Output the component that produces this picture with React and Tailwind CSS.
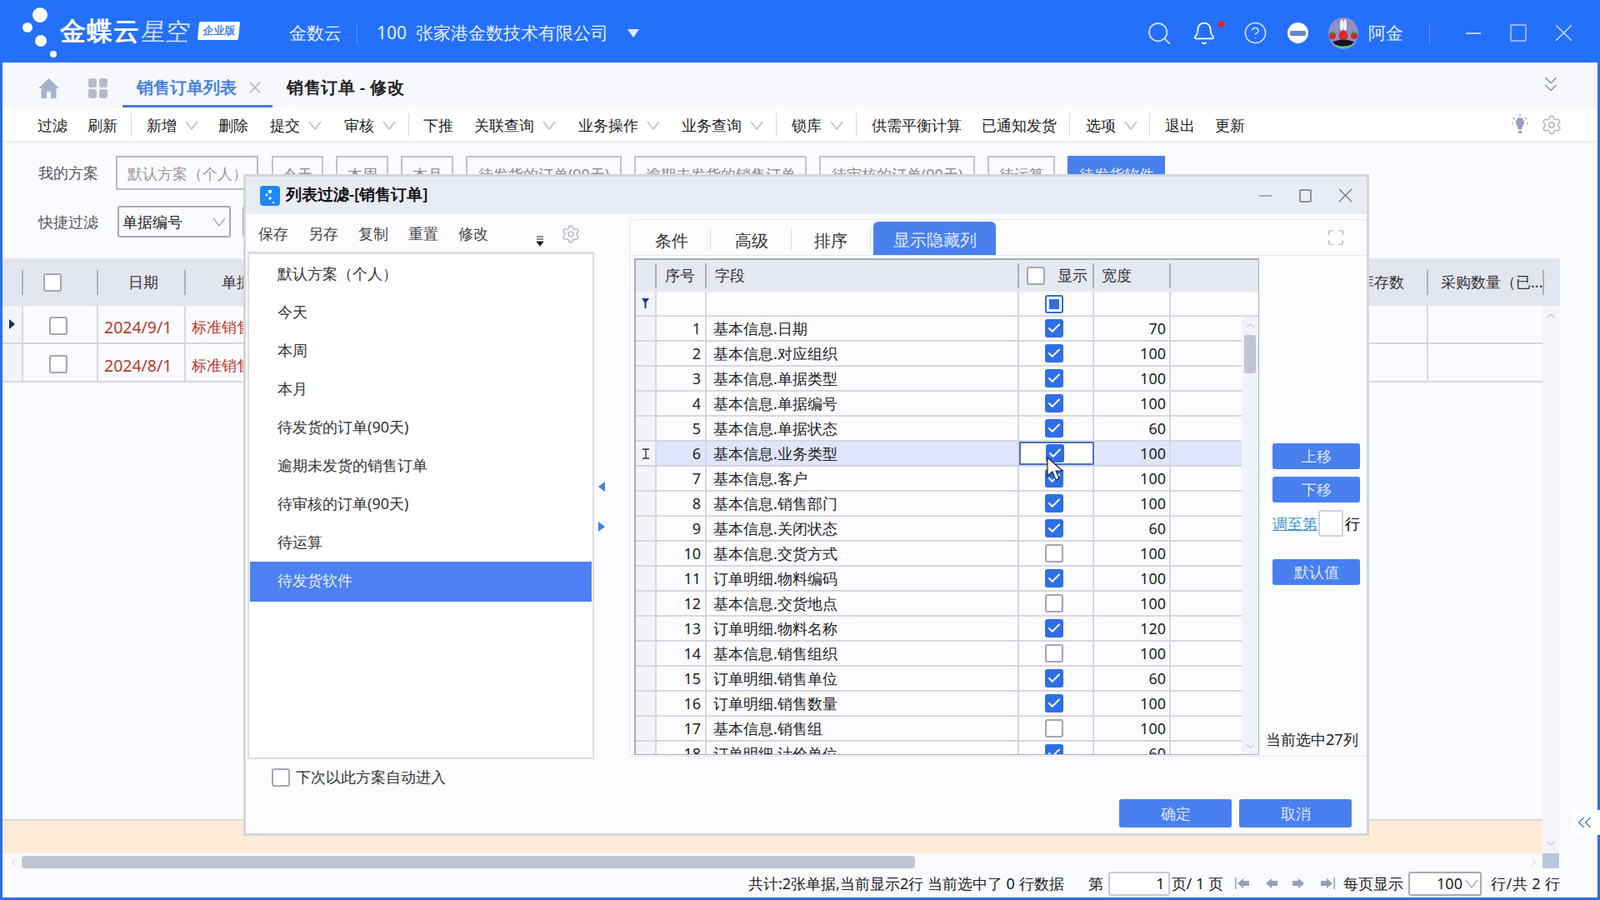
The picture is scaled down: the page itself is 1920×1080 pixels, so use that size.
import React from "react";
import { Search, Bell, CircleHelp, ChevronDown, ChevronUp, ChevronLeft, ChevronRight, ChevronsDown, ChevronsLeft, Settings, Check, Maximize } from "lucide-react";

const toolbarItems = [
  { label: "过滤", ml: "ml-0" },
  { label: "刷新", ml: "ml-[24px]" },
  { divider: true, ml: "ml-[16px]" },
  { label: "新增", ml: "ml-[18px]", chevron: true },
  { label: "删除", ml: "ml-[24px]" },
  { label: "提交", ml: "ml-[26px]", chevron: true },
  { label: "审核", ml: "ml-[27px]", chevron: true },
  { divider: true, ml: "ml-[15px]" },
  { label: "下推", ml: "ml-[17px]" },
  { label: "关联查询", ml: "ml-[25px]", chevron: true },
  { label: "业务操作", ml: "ml-[27px]", chevron: true },
  { label: "业务查询", ml: "ml-[26px]", chevron: true },
  { divider: true, ml: "ml-[15px]" },
  { label: "锁库", ml: "ml-[18px]", chevron: true },
  { divider: true, ml: "ml-[15px]" },
  { label: "供需平衡计算", ml: "ml-[18px]" },
  { label: "已通知发货", ml: "ml-[24px]" },
  { divider: true, ml: "ml-[15px]" },
  { label: "选项", ml: "ml-[19px]", chevron: true },
  { divider: true, ml: "ml-[14px]" },
  { label: "退出", ml: "ml-[18px]" },
  { label: "更新", ml: "ml-[24px]" },
];

const quickFilters = [
  { label: "今天", w: "w-[62px]" },
  { label: "本周", w: "w-[63px]" },
  { label: "本月", w: "w-[63px]" },
  { label: "待发货的订单(90天)", w: "w-[187px]" },
  { label: "逾期未发货的销售订单", w: "w-[207px]" },
  { label: "待审核的订单(90天)", w: "w-[187px]" },
  { label: "待运算", w: "w-[81px]" },
  { label: "待发货软件", w: "w-[117px]", active: true },
];

const schemes = [
  "默认方案（个人）",
  "今天",
  "本周",
  "本月",
  "待发货的订单(90天)",
  "逾期未发货的销售订单",
  "待审核的订单(90天)",
  "待运算",
];

const fields = [
  ["基本信息.日期", true, 70],
  ["基本信息.对应组织", true, 100],
  ["基本信息.单据类型", true, 100],
  ["基本信息.单据编号", true, 100],
  ["基本信息.单据状态", true, 60],
  ["基本信息.业务类型", true, 100],
  ["基本信息.客户", true, 100],
  ["基本信息.销售部门", true, 100],
  ["基本信息.关闭状态", true, 60],
  ["基本信息.交货方式", false, 100],
  ["订单明细.物料编码", true, 100],
  ["基本信息.交货地点", false, 100],
  ["订单明细.物料名称", true, 120],
  ["基本信息.销售组织", false, 100],
  ["订单明细.销售单位", true, 60],
  ["订单明细.销售数量", true, 100],
  ["基本信息.销售组", false, 100],
  ["订单明细.计价单位", true, 60],
];

const Box = ({ checked }) =>
  checked ? (
    <span className="flex h-[22px] w-[22px] items-center justify-center rounded-[3px] bg-[#2f6fe6]">
      <Check size={18} strokeWidth={2.6} className="text-white" />
    </span>
  ) : (
    <span className="block h-[22px] w-[22px] rounded-[3px] border-2 border-[#a3a6b4] bg-white"></span>
  );

// the thin V used by every dropdown in the app
const Vee = ({ className }) => (
  <svg width="16" height="11" viewBox="0 0 16 11" className={className}>
    <path d="M1 1l7 9 7-9" stroke="currentColor" strokeWidth="1.300" fill="none" />
  </svg>
);

const Cross = ({ size, className, width = 1.3 }) => (
  <svg width={size} height={size} viewBox="0 0 18 18" className={className}>
    <path d="M1 1l16 16M17 1L1 17" stroke="currentColor" strokeWidth={width} fill="none" />
  </svg>
);

const Logo = () => (
  <svg width="48" height="75" viewBox="0 0 48 75" className="-mt-[4px] shrink-0">
    <circle cx="24" cy="18" r="9" fill="#fff" />
    <circle cx="9" cy="33" r="6" fill="#fff" />
    <circle cx="25" cy="49" r="7" fill="#fff" />
    <circle cx="40" cy="65" r="4" fill="#fff" />
  </svg>
);

const Avatar = () => (
  <svg width="36" height="38" viewBox="0 0 36 38" className="shrink-0">
    <ellipse cx="18" cy="19" rx="18" ry="19" fill="#8f90c4" />
    <ellipse cx="16" cy="9" rx="2" ry="7" fill="#f3f3f3" />
    <ellipse cx="20" cy="9" rx="2" ry="7" fill="#f3f3f3" />
    <ellipse cx="18" cy="22" rx="5.500" ry="6.500" fill="#d92b2b" />
    <circle cx="5" cy="22" r="4" fill="#c92a2a" />
    <circle cx="31" cy="22" r="4" fill="#c92a2a" />
    <path d="M3 17l2 2 2-2M29 17l2 2 2-2" stroke="#2e9b4a" strokeWidth="2" fill="none" />
    <path d="M5 29 Q18 24 31 29 L27 33 Q18 36 9 33 Z" fill="#15151c" />
    <path d="M9 34 Q18 38 27 34" stroke="#5fc27d" strokeWidth="2" fill="none" />
  </svg>
);

const TopBar = () => (
  <div className="flex h-[75px] shrink-0 items-center bg-[#2470fb] pl-[24px] pr-[33px] pt-[4px] text-[#e4eeff]">
    <Logo />
    <span className="-mt-[6px] text-[31px] font-bold tracking-[1px] text-white">金蝶云</span>
    <span className="-mt-[6px] ml-[2px] inline-block -skew-x-6 text-[29px] font-light text-[#cfe0ff]">星空</span>
    <span className="-mt-[6px] ml-[10px] flex h-[22px] w-[49px] -skew-x-6 items-center justify-center rounded-[2px] bg-white text-[13px] font-bold text-[#4a86ee]">
      企业版
    </span>
    <span className="ml-[60px] text-[21px]">金数云</span>
    <span className="ml-[18px] h-[26px] w-px bg-[#5c93f8]"></span>
    <span className="ml-[23px] text-[21px]">100</span>
    <span className="ml-[11px] text-[21px]">张家港金数技术有限公司</span>
    <svg width="14" height="10" viewBox="0 0 14 10" className="ml-[23px]">
      <path d="M0 0h14L7 10z" fill="#e4eeff" />
    </svg>
    <Search size={32} strokeWidth={1.4} className="ml-auto text-[#c6dafd]" />
    <span className="relative ml-[23px]">
      <Bell size={30} strokeWidth={1.4} className="text-white" />
      <span className="absolute -right-[9px] top-0 h-[8px] w-[7px] rounded-full bg-[#e0202c]"></span>
    </span>
    <CircleHelp size={29} strokeWidth={1.3} className="ml-[32px] text-[#d5e4ff]" />
    <span className="ml-[24px] flex h-[25px] w-[25px] items-center justify-center rounded-full bg-white">
      <span className="block h-[6px] w-[19px] rounded-[2px] bg-[#6a86c8]"></span>
    </span>
    <span className="ml-[24px]">
      <Avatar />
    </span>
    <span className="ml-[12px] text-[21px]">阿金</span>
    <span className="ml-[31px] h-[26px] w-px bg-[#5c93f8]"></span>
    <span className="ml-[43px] h-[2px] w-[18px] bg-[#b8d0fb]"></span>
    <span className="ml-[35px] h-[21px] w-[20px] rounded-[2px] border-2 border-[#8db5fb]"></span>
    <Cross size={21} className="ml-[34px] text-[#c6dafd]" />
  </div>
);

const TabRow = () => (
  <div className="flex h-[54px] shrink-0 items-center bg-[#f7f8fd] pl-[43px] pt-[5px]">
    <svg width="25" height="24" viewBox="0 0 25 24" className="mt-[2px] shrink-0">
      <path d="M12.500 0L25 12h-3.500v12H15v-8H10v8H3.500V12H0z" fill="#a8b2cb" />
    </svg>
    <svg width="24" height="24" viewBox="0 0 24 24" className="ml-[34px] mt-[2px] shrink-0">
      <rect x="1" y="0" width="10" height="11" rx="3" fill="#b5bacd" />
      <rect x="14" y="0" width="10" height="11" rx="3" fill="#b5bacd" />
      <rect x="1" y="13" width="10" height="11" rx="3" fill="#b5bacd" />
      <rect x="14" y="13" width="10" height="11" rx="3" fill="#b5bacd" />
    </svg>
    <div className="relative -mt-[5px] ml-[18px] flex h-[54px] w-[180px] items-center pl-[17px] pt-[5px]">
      <span className="text-[20px] font-semibold text-[#4a80e4]">销售订单列表</span>
      <Cross size={14} width={2} className="ml-[15px] text-[#aab0bd]" />
      <span className="absolute bottom-0 left-0 h-[3px] w-full bg-[#4a7fd8]"></span>
    </div>
    <span className="ml-[17px] text-[20px] font-semibold tracking-[0.5px] text-[#222]">销售订单 - 修改</span>
    <ChevronsDown size={30} strokeWidth={1.3} className="-mt-[8px] ml-auto mr-[41px] text-[#8c95b0]" />
  </div>
);

const Toolbar = () => (
  <div className="relative z-10 flex h-[40px] shrink-0 items-center bg-white pl-[42px] pt-[2px] text-[18px] text-[#1c1c1c] shadow-[0_2px_3px_rgba(40,50,90,0.08)]">
    {toolbarItems.map((item, i) =>
      item.divider ? (
        <span key={i} className={`h-[28px] w-px bg-[#d8d9e0] ${item.ml}`}></span>
      ) : (
        <span key={i} className={`flex items-center ${item.ml}`}>
          {item.label}
          {item.chevron && <Vee className="ml-[10px] text-[#b4b8c4]" />}
        </span>
      )
    )}
    <svg width="20" height="26" viewBox="0 0 20 26" className="ml-auto shrink-0">
      <path d="M10 4c3 0 5 2.500 5 5.500 0 3-2 4-3 9h-4c-1-5-3-6-3-9C5 6.500 7 4 10 4z" fill="#98a0ba" />
      <path d="M10 0v2M2 4l2 2M18 4l-2 2M0 11h2M18 11h2" stroke="#98a0ba" strokeWidth="1.500" />
      <rect x="8" y="20" width="4" height="3" fill="#98a0ba" />
    </svg>
    <Settings size={26} strokeWidth={1.4} className="ml-[15px] mr-[42px] text-[#b0b6c6]" />
  </div>
);

const FilterArea = () => (
  <div className="flex h-[141px] shrink-0 flex-col pl-[43px] pt-[18px] text-[18px]">
    <div className="flex items-center">
      <span className="w-[93px] text-[#555]">我的方案</span>
      <div className="flex h-[41px] w-[171px] items-center border-2 border-[#b8bac4] pl-[12px] pt-[2px] text-[#999]">默认方案（个人）</div>
      <div className="ml-[16px] flex gap-[15px]">
        {quickFilters.map((f) => (
          <div
            key={f.label}
            className={
              f.active
                ? `flex h-[41px] items-center justify-center whitespace-nowrap bg-[#4a80ee] pt-[4px] text-[#e8efff] ${f.w}`
                : `flex h-[41px] items-center justify-center whitespace-nowrap border-2 border-[#c2c4cc] pt-[4px] text-[#888] ${f.w}`
            }
          >
            {f.label}
          </div>
        ))}
      </div>
    </div>
    <div className="mt-[19px] flex items-center">
      <span className="w-[95px] text-[#555]">快捷过滤</span>
      <div className="flex h-[38px] w-[136px] items-center justify-between rounded-[3px] border-2 border-[#a8abb8] pl-[4px] pr-[4px] text-[#222]">
        单据编号
        <Vee className="text-[#a4a8b6]" />
      </div>
      <div className="ml-[14px] h-[38px] w-[60px] rounded-[3px] border-2 border-[#a8abb8]"></div>
    </div>
  </div>
);

const HeadDivider = () => <span className="ml-auto h-[30px] w-[2px] shrink-0 bg-[#aeb0bb]"></span>;

const PageTable = () => (
  <div className="flex h-[714px] shrink-0 flex-col">
    <div className="mr-[45px] flex h-[57px] shrink-0 items-center bg-[#e3e5f0] text-[18px] text-[#333]">
      <div className="flex w-[25px] items-center"><HeadDivider /></div>
      <div className="flex w-[90px] items-center pl-[24px]"><Box /><HeadDivider /></div>
      <div className="flex w-[105px] items-center pl-[36px]">日期<HeadDivider /></div>
      <div className="flex w-[69px] items-center overflow-hidden whitespace-nowrap pl-[43px]">单据类型</div>
      <div className="flex-1"></div>
      <div className="flex w-[71px] items-center justify-end overflow-hidden whitespace-nowrap"><span className="mr-[27px]">库存数</span><HeadDivider /></div>
      <div className="flex w-[138px] items-center whitespace-nowrap pl-[15px]">采购数量（已...<HeadDivider /></div>
      <div className="w-[20px]"></div>
    </div>
    <div className="mr-[46px] flex min-h-0 flex-1">
      <div className="flex min-w-0 flex-1 flex-col">
        <div className="flex-1 border-b-2 border-[#d8d8dc]">
          {["2024/9/1", "2024/8/1"].map((date, i) => (
            <div key={date} className="flex h-[46px] border-b-2 border-[#d8d8e0] text-[#b83a2c]">
              <div className="flex w-[25px] items-center justify-center border-r-2 border-[#d8d8e0] bg-[#f3f4f9]">
                {i === 0 && (
                  <svg width="7" height="12" viewBox="0 0 7 12">
                    <path d="M0 0l7 6-7 6z" fill="#12305e" />
                  </svg>
                )}
              </div>
              <div className="flex w-[90px] items-center border-r-2 border-[#d8d8e0] pl-[31px] pt-[4px]"><Box /></div>
              <div className="flex w-[105px] items-center border-r-2 border-[#d8d8e0] pl-[7px] pt-[7px] text-[19.5px]">{date}</div>
              <div className="flex w-[69px] items-center overflow-hidden whitespace-nowrap pl-[7px] pt-[6px] text-[18px]">标准销售订单</div>
              <div className="flex-1"></div>
              <div className="w-[71px] border-r-2 border-[#d8d8e0]"></div>
              <div className="w-[137px]"></div>
            </div>
          ))}
        </div>
        <div className="h-[39px] shrink-0 bg-[#feecd6]"></div>
      </div>
      <div className="flex w-[20px] shrink-0 flex-col items-center justify-between bg-[#f3f4fc] py-[4px] text-[#c3c6d2]">
        <ChevronUp size={16} strokeWidth={1.8} />
        <ChevronDown size={16} strokeWidth={1.8} />
      </div>
    </div>
  </div>
);

const HorizontalScroll = () => (
  <div className="flex h-[18px] shrink-0 items-end text-[#c3c6d2]">
    <div className="flex h-[15px] w-[23px] items-center pl-[6px]">
      <ChevronLeft size={15} strokeWidth={1.6} />
    </div>
    <div className="h-[15px] w-[1072px] rounded-[4px] bg-[#c3c4d4]"></div>
    <div className="flex h-[15px] w-[753px] items-center justify-end pr-[3px]">
      <ChevronRight size={15} strokeWidth={1.6} />
    </div>
    <div className="h-[18px] w-[20px] bg-[#b9c6de]"></div>
  </div>
);

const Arrow = ({ flip, bar }) => (
  <svg width="18" height="16" viewBox="0 0 18 16" className={flip ? "shrink-0 -scale-x-100" : "shrink-0"}>
    {bar && <rect x="0" y="1" width="1.500" height="14" fill="#9aa0b4" />}
    <path d="M3 8l7-6v3h7v6h-7v3z" fill="#9aa0b4" />
  </svg>
);

const StatusBar = () => (
  <div className="flex h-[35px] shrink-0 items-center pl-[895px] pt-[1px] text-[18px] text-[#222]">
    <span className="whitespace-pre">共计:2张单据,当前显示2行 当前选中了 0 行数据</span>
    <span className="ml-[29px]">第</span>
    <div className="ml-[6px] flex h-[29px] w-[74px] items-center justify-end rounded-[3px] border-2 border-[#c8cad4] bg-white pr-[4px]">1</div>
    <span className="ml-[2px] whitespace-pre">页/ 1 页</span>
    <div className="ml-[14px] flex gap-[16px]">
      <Arrow bar />
      <Arrow />
      <Arrow flip />
      <Arrow flip bar />
    </div>
    <span className="ml-[10px]">每页显示</span>
    <div className="ml-[6px] flex h-[29px] w-[88px] items-center justify-end rounded-[3px] border-2 border-[#a8abb8] bg-white pr-[2px]">
      100
      <Vee className="ml-[3px] text-[#a4a8b6]" />
    </div>
    <span className="ml-[11px] whitespace-pre tracking-[0.5px]">行/共 2 行</span>
  </div>
);

const Grid = () => (
  <div className="relative ml-[5px] mt-[3px] flex h-[596px] w-[750px] shrink-0 flex-col overflow-hidden border-b border-l-2 border-r border-t-2 border-[#a9acb8] text-[18px] text-[#222]">
    <div className="flex h-[38px] shrink-0 items-center bg-[#e6e8f2] pb-[1px] text-[#333]">
      <div className="flex w-[25px] items-center"><HeadDivider /></div>
      <div className="flex w-[60px] items-center pl-[10px]">序号<HeadDivider /></div>
      <div className="flex w-[375px] items-center pl-[10px]">字段<HeadDivider /></div>
      <div className="flex w-[90px] items-center pl-[9px]">
        <Box />
        <span className="ml-[15px]">显示</span>
        <HeadDivider />
      </div>
      <div className="flex w-[92px] items-center pl-[9px]">宽度<HeadDivider /></div>
    </div>
    <div className="flex h-[30px] shrink-0 border-b-2 border-[#d7d8e0]">
      <div className="flex w-[25px] items-center justify-center border-r-2 border-[#d7d8e0] bg-[#f3f4f9]">
        <svg width="9" height="12" viewBox="0 0 9 12">
          <path d="M0 0h9L5.500 5v7h-2V5z" fill="#1c3a70" />
        </svg>
      </div>
      <div className="w-[60px] border-r-2 border-[#d7d8e0]"></div>
      <div className="w-[375px] border-r-2 border-[#d7d8e0]"></div>
      <div className="flex w-[90px] items-center justify-center border-r-2 border-[#d7d8e0] pr-[4px] pt-[2px]">
        <span className="flex h-[22px] w-[22px] items-center justify-center rounded-[3px] border-2 border-[#2f6fe6] bg-white">
          <span className="h-[12px] w-[12px] bg-[#2f6fe6]"></span>
        </span>
      </div>
      <div className="w-[92px] border-r-2 border-[#d7d8e0]"></div>
    </div>
    <div className="flex min-h-0 flex-1">
      <div className="w-[727px] shrink-0">
        {fields.map(([name, checked, width], i) => {
          const current = i === 5;
          return (
            <div key={name} className={current ? "flex h-[30px] border-b-2 border-[#d0d3e2] bg-[#dfe6fb]" : "flex h-[30px] border-b-2 border-[#d7d8e0]"}>
              <div className="flex w-[25px] items-center justify-center border-r-2 border-[#d7d8e0] bg-[#f3f4f9]">
                {current && (
                  <svg width="10" height="13" viewBox="0 0 10 13">
                    <path d="M1 1h8M1 12h8M5 1v11" stroke="#333" strokeWidth="1.300" fill="none" />
                  </svg>
                )}
              </div>
              <div className="flex w-[60px] items-center justify-end border-r-2 border-[#d7d8e0] pr-[5px]">{i + 1}</div>
              <div className="flex w-[375px] items-center border-r-2 border-[#d7d8e0] pl-[8px]">{name}</div>
              <div
                className={
                  current
                    ? "flex w-[90px] items-center justify-center border-2 border-[#4a72c0] bg-white pr-[4px]"
                    : "flex w-[90px] items-center justify-center border-r-2 border-[#d7d8e0] pr-[4px]"
                }
              >
                <Box checked={checked} />
              </div>
              <div className="flex w-[92px] items-center justify-end border-r-2 border-[#d7d8e0] pr-[4px]">{width}</div>
            </div>
          );
        })}
      </div>
      <div className="flex w-[20px] shrink-0 flex-col items-center justify-between bg-[#f1f3fc] pb-[2px] text-[#c3c6d2]">
        <div className="flex flex-col items-center">
          <ChevronUp size={15} strokeWidth={1.8} className="mt-[3px]" />
          <span className="mt-[4px] block h-[46px] w-[14px] rounded-[3px] bg-[#c3c4d4]"></span>
        </div>
        <ChevronDown size={15} strokeWidth={1.8} />
      </div>
    </div>
  </div>
);

const SideActions = () => (
  <div className="ml-[16px] flex w-[105px] shrink-0 flex-col text-[18px]">
    <button className="mt-[225px] h-[31px] rounded-[3px] bg-[#4a7ff0] text-[#dbe6ff]">上移</button>
    <button className="mt-[9px] h-[31px] rounded-[3px] bg-[#4a7ff0] text-[#dbe6ff]">下移</button>
    <div className="mt-[9px] flex h-[32px] items-center">
      <span className="w-[56px] whitespace-nowrap text-[#3f97c9] underline">调至第</span>
      <span className="h-[32px] w-[30px] rounded-[3px] border-2 border-[#d0d2da] bg-white"></span>
      <span className="ml-[2px]">行</span>
    </div>
    <button className="mt-[27px] h-[31px] rounded-[3px] bg-[#4a7ff0] text-[#dbe6ff]">默认值</button>
    <span className="-ml-[8px] mb-[6px] mt-auto whitespace-nowrap text-[#222]">当前选中27列</span>
  </div>
);

const FilterDialog = () => (
  <div className="absolute left-[292px] top-[209px] z-20 flex h-[794px] w-[1351px] flex-col border-[3px] border-[#d5d5db] bg-[#fcfcff] text-[18px]">
    <div className="flex h-[45px] shrink-0 items-center bg-[#eaecf5] pl-[17px] pr-[17px]">
      <svg width="24" height="24" viewBox="0 0 24 24" className="shrink-0">
        <rect width="24" height="24" rx="4" fill="#1e88f5" />
        <circle cx="12" cy="7" r="2.200" fill="#fff" />
        <circle cx="8" cy="11" r="1.500" fill="#fff" />
        <circle cx="12" cy="15" r="1.800" fill="#fff" />
        <circle cx="16" cy="20" r="1.200" fill="#fff" />
      </svg>
      <span className="-mt-[2px] ml-[7px] text-[19px] font-semibold text-[#111]">列表过滤-[销售订单]</span>
      <span className="ml-auto h-[2px] w-[15px] bg-[#a6a9b3]"></span>
      <span className="ml-[33px] h-[16px] w-[15px] rounded-[2px] border-2 border-[#8f929c]"></span>
      <Cross size={17} className="ml-[32px] text-[#70737c]" />
    </div>
    <div className="flex h-[654px] shrink-0">
      <div className="w-[418px] shrink-0 pl-[2px]">
        <div className="flex h-[45px] items-center pl-[13px] pt-[2px] text-[#444]">
          <div className="flex gap-[24px]">
            {["保存", "另存", "复制", "重置", "修改"].map((t) => (
              <span key={t}>{t}</span>
            ))}
          </div>
          <svg width="10" height="12" viewBox="0 0 10 12" className="ml-[57px] mt-[16px] shrink-0">
            <path d="M1 1h8M1 4h8M1 7h8L5 12z" fill="#222" stroke="#222" strokeWidth="1" />
          </svg>
          <Settings size={24} strokeWidth={1.4} className="ml-[20px] mr-auto text-[#b5b8c4]" />
        </div>
        <div className="h-[609px] border-2 border-t-[3px] border-[#dcdde4] bg-white px-px text-[#333]">
          {schemes.map((s) => (
            <div key={s} className="flex h-[46px] items-center pl-[33px]">{s}</div>
          ))}
          <div className="mt-px flex h-[48px] items-center bg-[#4d80f0] pb-[4px] pl-[33px] text-[#e4ecff]">待发货软件</div>
        </div>
      </div>
      <div className="w-[42px] shrink-0 pl-[5px] pt-[321px]">
        <svg width="8" height="12" viewBox="0 0 8 12" className="block">
          <path d="M8 0v12L0 6z" fill="#3f7fe8" />
        </svg>
        <svg width="8" height="12" viewBox="0 0 8 12" className="mt-[36px] block">
          <path d="M0 0v12l8-6z" fill="#3f7fe8" />
        </svg>
      </div>
      <div className="mt-[6px] flex h-[645px] w-[885px] shrink-0 flex-col rounded-tl-[6px] border-b border-l border-t border-[#e6e7ef]">
        <div className="flex h-[43px] shrink-0 items-end border-b border-[#e6e7ef] pl-[30px] text-[20px] text-[#333]">
          <span className="mb-[2px] w-[40px]">条件</span>
          <span className="mb-[6px] ml-[26px] h-[26px] w-px bg-[#dcdde4]"></span>
          <span className="mb-[2px] ml-[29px] w-[40px]">高级</span>
          <span className="mb-[6px] ml-[27px] h-[26px] w-px bg-[#dcdde4]"></span>
          <span className="mb-[2px] ml-[27px] w-[40px]">排序</span>
          <span className="mb-[6px] ml-[27px] h-[26px] w-px bg-[#dcdde4]"></span>
          <span className="ml-[3px] flex h-[40px] w-[147px] items-center justify-center rounded-t-[6px] bg-[#4a80ee] pt-[3px] text-[#dfe8ff]">显示隐藏列</span>
          <Maximize size={22} strokeWidth={1.3} className="mb-[10px] ml-[397px] text-[#a4a8b6]" />
        </div>
        <div className="flex min-h-0 flex-1">
          <Grid />
          <SideActions />
        </div>
      </div>
    </div>
    <div className="flex flex-1 items-start">
      <div className="ml-[31px] mt-[8px] flex items-center text-[#333]">
        <Box />
        <span className="ml-[7px]">下次以此方案自动进入</span>
      </div>
      <button className="ml-auto mt-[48px] h-[34px] w-[135px] rounded-[3px] bg-[#4a7ff0] text-[#dbe6ff]">确定</button>
      <button className="ml-[9px] mr-[18px] mt-[48px] h-[34px] w-[135px] rounded-[3px] bg-[#4a7ff0] text-[#dbe6ff]">取消</button>
    </div>
    <svg width="22" height="30" viewBox="0 0 22 30" className="absolute left-[961px] top-[336px]">
      <path d="M1 1v22l6-5 4 10 4-2-4-9h8z" fill="#fff" stroke="#222" strokeWidth="1.200" />
    </svg>
  </div>
);

export default function App() {
  return (
    <div className="relative h-[1080px] w-[1920px] overflow-hidden bg-[#2a6fe6] font-['Liberation_Sans','Noto_Sans_CJK_SC',sans-serif]">
      <TopBar />
      <div className="mx-[3px] flex h-[1002px] flex-col bg-[#fafbff]">
        <TabRow />
        <Toolbar />
        <FilterArea />
        <PageTable />
        <HorizontalScroll />
        <StatusBar />
      </div>
      <FilterDialog />
      <div className="absolute right-0 top-[972px] z-30 flex h-[30px] w-[32px] items-center justify-center rounded-l-[5px] bg-white pr-[5px]">
        <ChevronsLeft size={30} strokeWidth={1.2} className="text-[#4a72c8]" />
      </div>
    </div>
  );
}
